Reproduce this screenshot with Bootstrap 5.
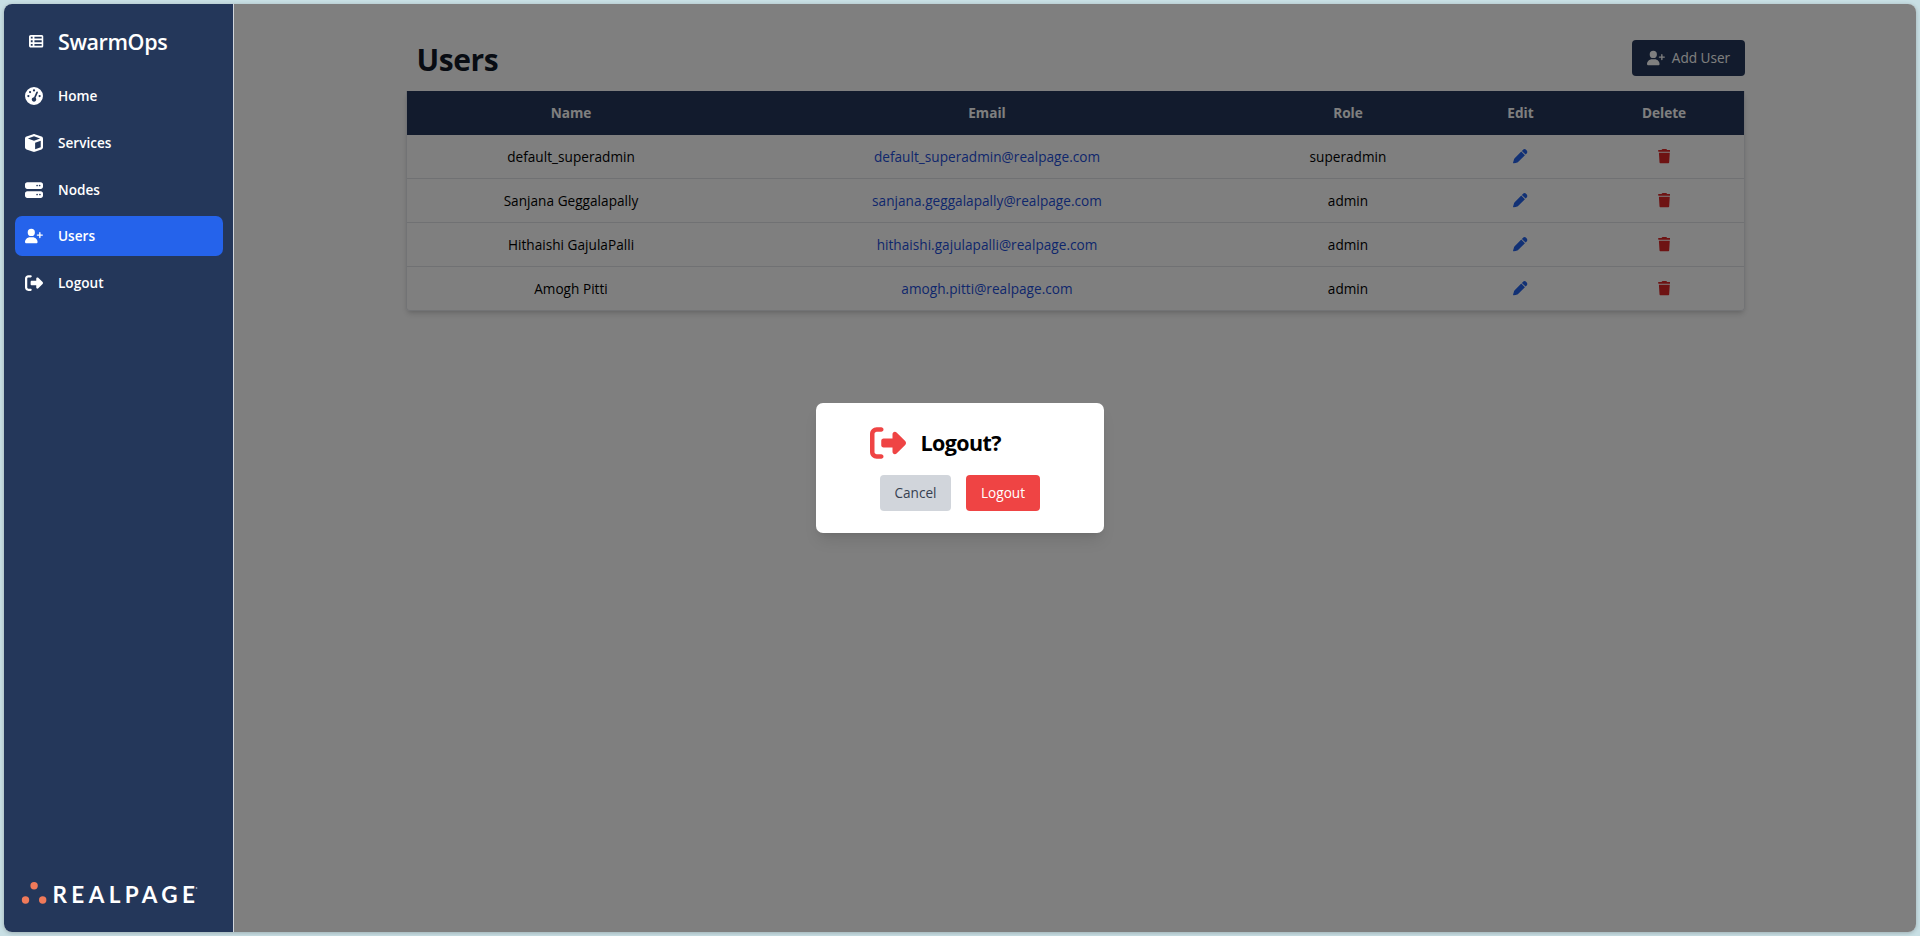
<!DOCTYPE html>
<html lang="en">
<head>
<meta charset="utf-8">
<meta name="viewport" content="width=device-width, initial-scale=1">
<title>SwarmOps - Users</title>
<link href="https://cdn.jsdelivr.net/npm/bootstrap@5.3.0/dist/css/bootstrap.min.css" rel="stylesheet">
<style>
:root { --navy: #24375a; --ink: "Open Sans", "Noto Sans", sans-serif; }
body { background: #c8dfe4; font-family: var(--ink); font-size: 13.6px; line-height: 20px; color: #000; height: 100vh; padding: 4px; overflow: hidden; }
.shell { border-radius: 8px; box-shadow: 0 1px 4px rgba(0,0,0,.22); background: #fff; }
.side { width: 230px; background: var(--navy); border-right: 1px solid #d1d5db; border-radius: 8px 0 0 8px; padding: 13px 10px 0 11px; color: #fff; }
.brand-row { height: 48px; padding-left: 14px; gap: 14.5px; }
.brand-name { font-size: 21.5px; font-weight: 600; letter-spacing: -.4px; line-height: 28px; padding-top: 1px; }
.side-menu { gap: 6.75px; margin-top: 11px; }
.side-menu .nav-link { height: 40px; padding: 0 10px 0 10.4px; gap: 14.6px; border-radius: 7px; color: #fff; font-weight: 600; }
.side-menu .nav-link.active { background: #2563eb; }
.side-menu svg, .btn-add svg { width: 18px; height: 18px; flex: none; }
svg { fill: currentColor; }
.corp { margin: auto 0 24px 6px; }
.stage { width: 1338px; margin-left: 173px; padding-top: 36px; }
.title-bar { height: 40px; }
.page-title { font-size: 30px; font-weight: 700; line-height: 40px; color: #111827; padding-left: 9.5px; letter-spacing: -.4px; }
.btn-add { width: 113px; height: 36px; background: var(--navy); color: #fff; border-radius: 4px; gap: 7px; font-size: inherit; padding: 0; }
.user-table { margin-top: 11px; border: 1px solid #e5e7eb; border-top: 0; border-radius: 0 0 4px 4px; box-shadow: 0 4px 6px -1px rgba(0,0,0,.14), 0 2px 4px -2px rgba(0,0,0,.12); margin-left: -1px; width: 1339px; }
.user-table table { table-layout: fixed; margin: 0; border-collapse: separate; border-spacing: 0; }
.user-table th { background: var(--navy); color: #fff; height: 44px; padding: 0; font-weight: 700; vertical-align: middle; border: 0; }
.user-table td { height: 44px; padding: 0; vertical-align: middle; border: 0; border-bottom: 1px solid #e0e3e7; color: #000; background: transparent; letter-spacing: .03px; }
.user-table tr:last-child td { border-bottom: 0; height: 43px; }
.user-table td svg { display: block; margin: 0 auto; }
.user-table td.mail { color: #1d4ed8; }
.user-table td.pen { color: #2563eb; }
.user-table td.bin { color: #dc2626; }
.shade { background: rgba(0,0,0,.5); border-radius: 0 8px 8px 0; }
.ask { width: 288px; height: 130px; background: #fff; border-radius: 7px; padding: 22px 0; box-shadow: 0 10px 15px -3px rgba(0,0,0,.1), 0 4px 6px -4px rgba(0,0,0,.1); }
.ask-head { height: 36px; gap: 14.5px; padding-left: 54px; }
.ask-head svg { color: #ef4444; }
.ask-title { font-size: 21.5px; font-weight: 700; letter-spacing: -.6px; line-height: 28px; }
.ask-actions { gap: 15px; margin-top: 14px; }
.ask .btn { height: 36px; border: 0; padding: 0; border-radius: 4px; font-size: inherit; }
.btn-keep, .btn-keep:hover { width: 71px; background: #d1d5db; color: #374151; }
.btn-leave, .btn-leave:hover { width: 74px; background: #ef4444; color: #fff; }
</style>
</head>
<body>
<svg class="d-none" xmlns="http://www.w3.org/2000/svg">
<symbol id="i-list" viewBox="0 0 512 512"><path d="M0 96C0 60.7 28.7 32 64 32H448c35.3 0 64 28.7 64 64V416c0 35.3-28.7 64-64 64H64c-35.3 0-64-28.7-64-64V96zm64 0v64h64V96H64zm384 0H192v64H448V96zM64 224v64h64V224H64zm384 0H192v64H448V224zM64 352v64h64V352H64zm384 0H192v64H448V352z"/></symbol>
<symbol id="i-gauge" viewBox="0 0 512 512"><path d="M0 256a256 256 0 1 1 512 0A256 256 0 1 1 0 256zM288 96a32 32 0 1 0 -64 0 32 32 0 1 0 64 0zM256 416c35.3 0 64-28.7 64-64c0-17.4-6.9-33.1-18.100-44.600L366 161.700c5.300-12.100-.2-26.300-12.300-31.600s-26.300 .2-31.600 12.300L257.900 288c-.6 0-1.300 0-1.900 0c-35.300 0-64 28.700-64 64s28.700 64 64 64zM176 144a32 32 0 1 0 -64 0 32 32 0 1 0 64 0zM96 288a32 32 0 1 0 0-64 32 32 0 1 0 0 64zm352-32a32 32 0 1 0 -64 0 32 32 0 1 0 64 0z"/></symbol>
<symbol id="i-cube" viewBox="0 0 512 512"><path d="M234.500 5.700c13.900-5 29.100-5 43.100 0l192 68.600C495 83.400 512 107.500 512 134.600V377.400c0 27-17 51.200-42.500 60.300l-192 68.600c-13.900 5-29.100 5-43.100 0l-192-68.600C17 428.600 0 404.500 0 377.400V134.600c0-27 17-51.200 42.500-60.300l192-68.600zM256 66L82.300 128 256 190l173.700-62L256 66zm32 368.600l160-57.100v-188L288 246.600v188z"/></symbol>
<symbol id="i-server" viewBox="0 0 512 512"><path d="M64 32C28.700 32 0 60.700 0 96v64c0 35.300 28.700 64 64 64H448c35.300 0 64-28.700 64-64V96c0-35.300-28.700-64-64-64H64zm280 72a24 24 0 1 1 0 48 24 24 0 1 1 0-48zm48 24a24 24 0 1 1 48 0 24 24 0 1 1 -48 0zM64 288c-35.300 0-64 28.700-64 64v64c0 35.300 28.700 64 64 64H448c35.300 0 64-28.700 64-64V352c0-35.300-28.700-64-64-64H64zm280 72a24 24 0 1 1 0 48 24 24 0 1 1 0-48zm56 24a24 24 0 1 1 48 0 24 24 0 1 1 -48 0z"/></symbol>
<symbol id="i-plus" viewBox="0 0 640 512"><path d="M96 128a128 128 0 1 1 256 0A128 128 0 1 1 96 128zM0 482.300C0 383.800 79.800 304 178.300 304h91.400C368.200 304 448 383.800 448 482.300c0 16.400-13.300 29.700-29.700 29.700H29.700C13.300 512 0 498.700 0 482.300zM504 312V248H440c-13.300 0-24-10.700-24-24s10.700-24 24-24h64V136c0-13.300 10.700-24 24-24s24 10.700 24 24v64h64c13.300 0 24 10.700 24 24s-10.700 24-24 24H552v64c0 13.300-10.700 24-24 24s-24-10.700-24-24z"/></symbol>
<symbol id="i-exit" viewBox="0 0 512 512"><path d="M377.900 105.900L500.700 228.700c7.200 7.200 11.300 17.100 11.300 27.300s-4.100 20.100-11.300 27.300L377.900 406.100c-6.400 6.400-15 9.900-24 9.900c-18.700 0-33.900-15.200-33.900-33.900l0-62.100-128 0c-17.700 0-32-14.300-32-32l0-64c0-17.700 14.300-32 32-32l128 0 0-62.100c0-18.700 15.200-33.900 33.900-33.900c9 0 17.600 3.600 24 9.900zM160 96L96 96c-17.700 0-32 14.300-32 32l0 256c0 17.700 14.300 32 32 32l64 0c17.700 0 32 14.300 32 32s-14.300 32-32 32l-64 0c-53 0-96-43-96-96L0 128C0 75 43 32 96 32l64 0c17.700 0 32 14.300 32 32s-14.300 32-32 32z"/></symbol>
<symbol id="i-pen" viewBox="0 0 512 512"><path d="M362.700 19.300L314.300 67.700 444.300 197.700l48.400-48.400c25-25 25-65.500 0-90.500L453.300 19.300c-25-25-65.500-25-90.500 0zm-71 71L58.600 323.500c-10.400 10.400-18 23.300-22.200 37.400L1 481.200C-1.500 489.700 .8 498.800 7 505s15.300 8.500 23.700 6.100l120.300-35.400c14.100-4.200 27-11.800 37.400-22.200L421.700 220.300 291.700 90.300z"/></symbol>
<symbol id="i-bin" viewBox="0 0 448 512"><path d="M135.200 17.700L128 32H32C14.300 32 0 46.300 0 64S14.300 96 32 96H416c17.700 0 32-14.300 32-32s-14.300-32-32-32H320l-7.200-14.300C307.400 6.800 296.300 0 284.200 0H163.800c-12.100 0-23.200 6.800-28.600 17.700zM416 128H32L53.200 467c1.600 25.300 22.600 45 47.900 45H346.900c25.300 0 46.300-19.700 47.900-45L416 128z"/></symbol>
</svg>

<div class="shell d-flex h-100 position-relative">
  <aside class="side d-flex flex-column">
    <div class="brand-row d-flex align-items-center">
      <svg width="14.500" height="14.500"><use href="#i-list"/></svg>
      <span class="brand-name">SwarmOps</span>
    </div>
    <nav class="side-menu nav flex-column">
      <a class="nav-link d-flex align-items-center" href="#"><svg><use href="#i-gauge"/></svg>Home</a>
      <a class="nav-link d-flex align-items-center" href="#"><svg><use href="#i-cube"/></svg>Services</a>
      <a class="nav-link d-flex align-items-center" href="#"><svg><use href="#i-server"/></svg>Nodes</a>
      <a class="nav-link d-flex align-items-center active" href="#"><svg><use href="#i-plus"/></svg>Users</a>
      <a class="nav-link d-flex align-items-center" href="#"><svg><use href="#i-exit"/></svg>Logout</a>
    </nav>
    <svg class="corp" width="180" height="30" viewBox="0 0 180 30">
      <g fill="#f07a5a"><circle cx="13.100" cy="7.800" r="3.700"/><circle cx="4.500" cy="22" r="3.700"/><circle cx="21.700" cy="22" r="3.700"/></g>
      <text x="31.500" y="25" textLength="142.500" font-family="Lato, sans-serif" font-weight="700" font-size="22.500" fill="#fff">REALPAGE</text>
      <circle cx="175.500" cy="10" r=".9" fill="#9aa5b8"/>
    </svg>
  </aside>

  <main class="flex-grow-1 position-relative">
    <div class="stage">
      <div class="title-bar d-flex justify-content-between align-items-start">
        <h1 class="page-title mb-0">Users</h1>
        <button class="btn btn-add d-flex align-items-center justify-content-center"><svg><use href="#i-plus"/></svg>Add User</button>
      </div>
      <div class="user-table">
        <table class="table text-center">
          <colgroup><col style="width:328px"><col style="width:504px"><col style="width:218px"><col style="width:127px"><col style="width:160px"></colgroup>
          <thead><tr><th>Name</th><th>Email</th><th>Role</th><th>Edit</th><th>Delete</th></tr></thead>
          <tbody>
            <tr><td>default_superadmin</td><td class="mail">default_superadmin@realpage.com</td><td>superadmin</td><td class="pen"><svg width="14.500" height="14.500"><use href="#i-pen"/></svg></td><td class="bin"><svg width="12.700" height="14.500"><use href="#i-bin"/></svg></td></tr>
            <tr><td>Sanjana Geggalapally</td><td class="mail">sanjana.geggalapally@realpage.com</td><td>admin</td><td class="pen"><svg width="14.500" height="14.500"><use href="#i-pen"/></svg></td><td class="bin"><svg width="12.700" height="14.500"><use href="#i-bin"/></svg></td></tr>
            <tr><td>Hithaishi GajulaPalli</td><td class="mail">hithaishi.gajulapalli@realpage.com</td><td>admin</td><td class="pen"><svg width="14.500" height="14.500"><use href="#i-pen"/></svg></td><td class="bin"><svg width="12.700" height="14.500"><use href="#i-bin"/></svg></td></tr>
            <tr><td>Amogh Pitti</td><td class="mail">amogh.pitti@realpage.com</td><td>admin</td><td class="pen"><svg width="14.500" height="14.500"><use href="#i-pen"/></svg></td><td class="bin"><svg width="12.700" height="14.500"><use href="#i-bin"/></svg></td></tr>
          </tbody>
        </table>
      </div>
    </div>
    <div class="shade position-absolute top-0 start-0 w-100 h-100"></div>
  </main>

  <div class="position-absolute top-0 start-0 w-100 h-100 d-flex align-items-center justify-content-center">
    <div class="ask" role="dialog">
      <div class="ask-head d-flex align-items-center">
        <svg width="36" height="36"><use href="#i-exit"/></svg>
        <span class="ask-title">Logout?</span>
      </div>
      <div class="ask-actions d-flex justify-content-center">
        <button class="btn btn-keep">Cancel</button>
        <button class="btn btn-leave">Logout</button>
      </div>
    </div>
  </div>
</div>
<script src="https://cdn.jsdelivr.net/npm/bootstrap@5.3.0/dist/js/bootstrap.bundle.min.js"></script>
</body>
</html>
